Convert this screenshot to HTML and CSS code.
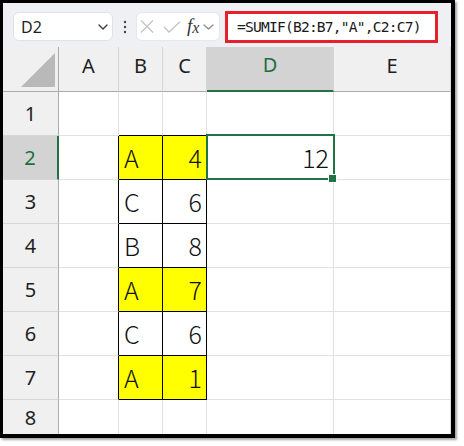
FILE: index.html
```html
<!DOCTYPE html>
<html>
<head>
<meta charset="utf-8">
<link rel="stylesheet" href="styles.css">
</head>
<body>
<div class="frame">
  <div class="toolbar">
    <div class="namebox">
      <span class="ref">D2</span>
      <svg class="chev" width="10" height="6" viewBox="0 0 10 6"><path d="M1 1l4 4 4-4" stroke="#3c3c3c" stroke-width="1.4" fill="none" stroke-linecap="round" stroke-linejoin="round"/></svg>
    </div>
    <div class="dots"><svg width="4" height="14" viewBox="0 0 4 14"><circle cx="2" cy="2" r="1.2" fill="#444"/><circle cx="2" cy="7" r="1.2" fill="#444"/><circle cx="2" cy="12" r="1.2" fill="#444"/></svg></div>
    <div class="fxbox">
      <svg class="ico-x" width="14" height="13" viewBox="0 0 14 13"><path d="M1 0.5L13 12.5M13 0.5L1 12.5" stroke="#c4c4c4" stroke-width="1.3" fill="none"/></svg>
      <svg class="ico-ok" width="18" height="12" viewBox="0 0 18 12"><path d="M1 6L6 11L17 0.8" stroke="#c4c4c4" stroke-width="1.3" fill="none"/></svg>
      <span class="fx">f<span class="fxx">x</span></span>
      <svg class="chev2" width="11" height="6" viewBox="0 0 11 6"><path d="M1 1l4.5 4 4.5-4" stroke="#8a8a8a" stroke-width="1.3" fill="none" stroke-linecap="round" stroke-linejoin="round"/></svg>
    </div>
    <div class="formula">=SUMIF(B2:B7,"A",C2:C7)</div>
  </div>
  <div class="grid">
    <div class="corner"><svg width="56" height="45" viewBox="0 0 56 45"><polygon points="18,40 52,40 52,6" fill="#b9b9b9"/></svg></div>
    <div class="hd">A</div>
    <div class="hd">B</div>
    <div class="hd">C</div>
    <div class="hd sel">D</div>
    <div class="hd">E</div>

    <div class="rh">1</div>
    <div class="c"></div>
    <div class="c bb"></div>
    <div class="c bb"></div>
    <div class="c"></div>
    <div class="c"></div>

    <div class="rh sel">2</div>
    <div class="c br"></div>
    <div class="c bx y">A</div>
    <div class="c bx y num">4</div>
    <div class="c num active">12</div>
    <div class="c"></div>

    <div class="rh">3</div>
    <div class="c br"></div>
    <div class="c bx">C</div>
    <div class="c bx num">6</div>
    <div class="c"></div>
    <div class="c"></div>

    <div class="rh">4</div>
    <div class="c br"></div>
    <div class="c bx">B</div>
    <div class="c bx num">8</div>
    <div class="c"></div>
    <div class="c"></div>

    <div class="rh">5</div>
    <div class="c br"></div>
    <div class="c bx y">A</div>
    <div class="c bx y num">7</div>
    <div class="c"></div>
    <div class="c"></div>

    <div class="rh">6</div>
    <div class="c br"></div>
    <div class="c bx">C</div>
    <div class="c bx num">6</div>
    <div class="c"></div>
    <div class="c"></div>

    <div class="rh">7</div>
    <div class="c br"></div>
    <div class="c bx y">A</div>
    <div class="c bx y num">1</div>
    <div class="c"></div>
    <div class="c"></div>

    <div class="rh last">8</div>
    <div class="c"></div>
    <div class="c"></div>
    <div class="c"></div>
    <div class="c"></div>
    <div class="c"></div>
  </div>
</div>
</body>
</html>
```

FILE: styles.css
```css
* { box-sizing: border-box; }
html, body { margin: 0; padding: 0; background: #ffffff; }
body { width: 464px; height: 446px; overflow: hidden; font-family: "Noto Sans", sans-serif; }

.frame {
  width: 455px;
  height: 438px;
  border-style: solid;
  border-color: #000;
  border-width: 3px 4px 4px 3px;
  box-shadow: 2px 2px 2px rgba(0,0,0,0.35);
  background: #fff;
  overflow: hidden;
}

.toolbar {
  height: 44px;
  background: #eef0f3;
  display: flex;
  align-items: center;
  padding: 7px 0 4px 10px;
}

.namebox {
  width: 100px;
  height: 29px;
  background: #fff;
  border: 1px solid #e0e2e6;
  border-radius: 6px;
  display: flex;
  align-items: center;
  padding: 0 4px 0 7px;
}
.ref { flex: 1; font-size: 16px; color: #1f1f1f; line-height: 1; }
.chev { display: block; }

.dots {
  width: 23px;
  display: flex;
  justify-content: center;
  align-items: center;
}
.dots svg { display: block; }

.fxbox {
  width: 84px;
  height: 29px;
  background: #fff;
  border: 1px solid #e6e8eb;
  border-radius: 6px;
  display: flex;
  align-items: center;
  padding-left: 3px;
}
.ico-x { display: block; margin-right: 9px; }
.ico-ok { display: block; margin-right: 6px; }
.fx {
  font-family: "Liberation Serif", serif;
  font-style: italic;
  font-size: 19px;
  color: #333;
  line-height: 1;
  margin-top: -2px;
}
.fxx { font-size: 16px; position: relative; top: 1px; }
.chev2 { display: block; margin-left: 4px; }

.formula {
  margin-left: 5px;
  width: 213px;
  height: 32px;
  background: #fff;
  border: 3px solid #e8202a;
  padding-left: 9px;
  display: flex;
  align-items: center;
  font-family: "DejaVu Sans Mono", monospace;
  font-size: 14.6px;
  letter-spacing: -0.8px;
  color: #1a1a1a;
  white-space: nowrap;
}

.grid {
  display: grid;
  grid-template-columns: 56px 60px 44px 44px 127px 117px;
  grid-template-rows: 45px repeat(7, 44px) 35px;
}

.corner {
  background: #f0f0f0;
  border-right: 1px solid #ababab;
  border-bottom: 1px solid #ababab;
}
.corner svg { display: block; }

.hd {
  background: #f0f0f0;
  border-right: 1px solid #d6d6d6;
  border-bottom: 1px solid #ababab;
  display: flex;
  align-items: center;
  justify-content: center;
  padding-bottom: 8px;
  font-size: 20px;
  color: #1f1f1f;
}
.hd.sel {
  background: #d3d3d3;
  border-bottom: 2px solid #217346;
  color: #1e6e42;
}

.rh {
  background: #f0f0f0;
  border-right: 1px solid #ababab;
  border-bottom: 1px solid #d6d6d6;
  display: flex;
  align-items: center;
  justify-content: center;
  font-size: 20px;
  color: #1f1f1f;
}
.rh.sel {
  background: #d3d3d3;
  border-right: 2px solid #217346;
  color: #1e6e42;
}
.rh.last { border-bottom: none; }

.c {
  border-right: 1px solid #e1e1e1;
  border-bottom: 1px solid #e1e1e1;
  display: flex;
  align-items: center;
  padding: 0 4px 0 5px;
  font-family: "Noto Sans CJK JP", "Noto Sans", sans-serif;
  font-size: 25px;
  font-weight: 300;
  line-height: 1;
  color: #111;
}
.c.num { justify-content: flex-end; }
.c.bb { border-bottom-color: #000; }
.c.br { border-right-color: #000; }
.c.bx { border-right-color: #000; border-bottom-color: #000; }
.c.y { background: #ffff00; }

.c.active { position: relative; }
.c.active::after {
  content: "";
  position: absolute;
  top: -2px;
  left: -1px;
  right: -2px;
  bottom: -1px;
  border: 2px solid #217346;
}
.c.active::before {
  content: "";
  position: absolute;
  right: -4px;
  bottom: -4px;
  width: 7px;
  height: 7px;
  background: #217346;
  border: 1px solid #fff;
  z-index: 2;
}
```
